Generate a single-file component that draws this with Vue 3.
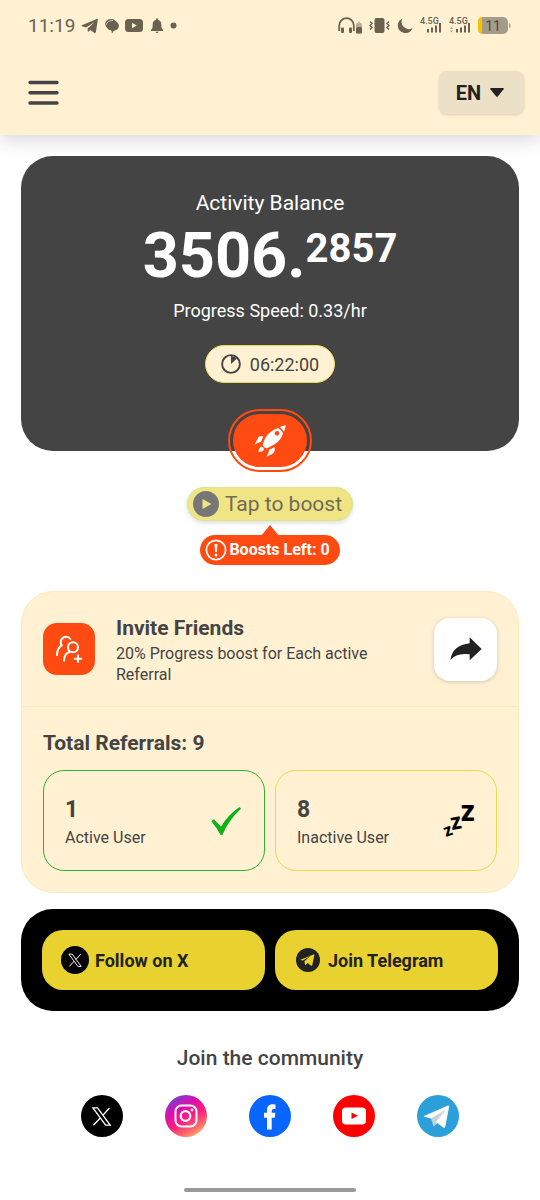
<script setup>
import { ref } from 'vue'

const balance = ref({ whole: '3506.', fraction: '2857' })
const speed = ref('0.33/hr')
const timer = ref('06:22:00')
const boostsLeft = ref(0)
const referrals = ref({ total: 9, active: 1, inactive: 8 })
const xLogo = 'M2.2 2.200h5.200L21.800 21.800h-5.200zM21 2.200l-7.900 8.700M10.700 13.300 2.800 21.800'
</script>

<template>
  <div class="page">
    <header class="header">
      <div class="status">
        <div class="status-group">
          <span class="clock">11:19</span>
          <svg width="18" height="18" viewBox="0 0 18 18" fill="#6a6250">
            <path d="M.8 8.300 15.800 2.100q1.200-.4 1 .8L14.900 15q-.4 1.600-1.700.8L9.200 13l-2.300 2-.3-3.600 6.800-6.100-8.300 5.300L.9 9.300q-.7-.6-.1-1z" />
          </svg>
          <svg width="14" height="18" viewBox="0 0 14 18">
            <ellipse cx="6" cy="7" rx="5.800" ry="5" fill="#6a6250" />
            <path d="M7.600 3.800c3.600 0 6.300 2.100 6.300 5 0 3-2.300 4.700-5 5L7 16.400l-.6-2.800C3.600 13 1.600 11.400 1.600 8.800c0-2.900 2.400-5 6-5z" fill="#6a6250" />
            <path d="M1.200 7.800C1.800 5 4.500 3.300 8 3.500" fill="none" stroke="#fff1d2" stroke-width=".7" />
          </svg>
          <svg width="18" height="18" viewBox="0 0 18 18">
            <rect x="0" y="2" width="18" height="13" rx="3.500" fill="#6a6250" />
            <path d="M7 5.800v5.400l4.800-2.700z" fill="#fff1d2" />
          </svg>
          <svg class="bell" width="12" height="18" viewBox="0 0 12 18" fill="#6a6250">
            <path d="M5 2.200q0-1 1-1t1 1v.5c2.300.6 3.300 2.400 3.300 4.800 0 3 .3 4.300 1.700 5.300V14H0v-1.200c1.400-1 1.700-2.300 1.700-5.300 0-2.400 1-4.200 3.300-4.800zM4.500 14.800h3q-.2 1.300-1.500 1.300t-1.500-1.300z" />
          </svg>
          <svg width="7" height="18" viewBox="0 0 7 18"><circle cx="3.500" cy="8.500" r="3" fill="#6a6250" /></svg>
        </div>
        <div class="status-group right">
          <svg width="24" height="18" viewBox="0 0 24 18">
            <path d="M1.200 14V8.500a7.300 7.300 0 0 1 14.600 0V14" fill="none" stroke="#6a6250" stroke-width="1.800" />
            <rect x="3" y="10.500" width="3" height="5.500" rx="1" fill="#6a6250" />
            <rect x="11" y="10.500" width="3" height="5.500" rx="1" fill="#6a6250" />
            <rect x="18" y="6" width="6" height="10.500" rx="1.500" fill="#b8ae93" />
            <rect x="18" y="10" width="6" height="6.500" rx="1.500" fill="#6a6250" />
            <rect x="20" y="4.500" width="2" height="2" fill="#cfc4a6" />
          </svg>
          <svg width="21" height="18" viewBox="0 0 21 18">
            <rect x="5.500" y="1" width="10" height="15" rx="2" fill="#6a6250" />
            <path d="m1 4.500 2 2-2 2 2 2-2 2M20 4.500l-2 2 2 2-2 2 2 2" fill="none" stroke="#6a6250" stroke-width="1.500" />
          </svg>
          <svg width="16" height="18" viewBox="0 0 16 18">
            <path d="M5.500 1.500A7.600 7.600 0 1 0 15.600 11 7.200 7.200 0 0 1 5.500 1.500z" fill="#6a6250" />
          </svg>
          <svg class="signal" width="22" height="18" viewBox="0 0 22 18" fill="#6a6250">
            <text x="0" y="7" class="net">4.5G</text>
            <path d="M7 12h2v3.500H7zM11 10.500h2v5h-2zM15 8.500h2v7h-2zM19 6h2v9.500h-2z" />
          </svg>
          <svg class="signal" width="22" height="18" viewBox="0 0 22 18" fill="#6a6250">
            <text x="0" y="7" class="net">4.5G</text>
            <path d="M7 12h2v3.500H7zM11 10.500h2v5h-2zM15 8.500h2v7h-2zM19 6h2v9.500h-2z" />
            <path d="m1 12 1.500-2L4 12zM1 13.500 2.500 15.500 4 13.500z" fill="#aaa189" />
          </svg>
          <svg width="33" height="18" viewBox="0 0 33 18">
            <rect x="0" y="0" width="30" height="17" rx="5" fill="#a49c88" />
            <path d="M4 0v17A4.500 4.500 0 0 1 0 12.500v-8A4.500 4.500 0 0 1 4 0z" fill="#f5c400" />
            <path d="M31 6q1.500 0 1.500 2.500T31 11z" fill="#a49c88" />
            <text x="15" y="13.500" text-anchor="middle" class="charge">11</text>
          </svg>
        </div>
      </div>
      <nav class="bar">
        <button class="menu" type="button" aria-label="Menu">
          <svg width="31" height="26" viewBox="0 0 31 26" stroke="#444" stroke-width="3.400" stroke-linecap="round">
            <path d="M2 2.500h27M2 12.800h27M2 23h27" />
          </svg>
        </button>
        <button class="lang" type="button">
          EN
          <svg width="14" height="9" viewBox="0 0 14 9"><path d="M1 0h12q1.400.2.600 1.300L8 8.300q-1 1-2 0L.4 1.300Q-.4.2 1 0z" fill="#222" /></svg>
        </button>
      </nav>
    </header>

    <main class="main">
      <section class="balance">
        <h1 class="balance-title">Activity Balance</h1>
        <p class="amount">{{ balance.whole }}<span>{{ balance.fraction }}</span></p>
        <p class="speed">Progress Speed: {{ speed }}</p>
        <div class="timer">
          <svg width="20" height="20" viewBox="0 0 20 20">
            <circle cx="10" cy="10" r="8.900" fill="none" stroke="#444" stroke-width="1.900" />
            <path d="M10 10V2a8 8 0 0 1 6 2.500z" fill="#444" />
          </svg>
          {{ timer }}
        </div>
      </section>

      <div class="boost">
        <button class="rocket" type="button" aria-label="Boost">
          <span class="rocket-core">
            <svg width="32" height="32" viewBox="0 0 96 96" fill="#fff">
              <path d="M77 6 93 1q3 0 2 3l-5 17q-5-10-13-15z" />
              <path fill-rule="evenodd" d="M72 9q11 5 15 16-4 19-25 33L41 69q-6 3-11-3-6-4-2-13l6-14Q46 18 72 9zM69 18a7 7 0 1 0 0 14 7 7 0 0 0 0-14z" />
              <path d="M28 34H18q-4 0-6 5L1 60q10-9 20-9z" />
              <path d="M62 66v10q0 7-7 11l-18 8q8-10 8-20z" />
              <path d="M21 65q9 1 9 10-6 7-16 6-1-11 7-16z" />
            </svg>
          </span>
        </button>
        <button class="tap" type="button">
          <svg width="26" height="26" viewBox="0 0 26 26">
            <circle cx="13" cy="13" r="13" fill="#777" />
            <path d="M9.500 8v10l9-5z" fill="#f0e484" />
          </svg>
          Tap to boost
        </button>
        <div class="left">
          <svg width="22" height="22" viewBox="0 0 22 22">
            <circle cx="11" cy="11" r="9.600" fill="none" stroke="#fff" stroke-width="1.700" />
            <path d="M9.500 5h3l-.6 8h-1.800z" fill="#fff" />
            <circle cx="11" cy="16" r="1.500" fill="#fff" />
          </svg>
          Boosts Left: {{ boostsLeft }}
        </div>
      </div>

      <section class="referrals">
        <div class="invite">
          <div class="invite-icon">
            <svg width="28" height="28" viewBox="0 0 84 84" fill="none" stroke="#fff" stroke-width="6" stroke-linecap="round">
              <path d="M46 12A16 16 0 1 0 20 31C12 36 6 46 6 60" />
              <circle cx="54" cy="37" r="15" />
              <path d="M43 51C32 55 27 64 27 77M69 61v20M59 71h20" />
            </svg>
          </div>
          <div class="invite-text">
            <h2>Invite Friends</h2>
            <p>20% Progress boost for Each active Referral</p>
          </div>
          <button class="share" type="button" aria-label="Share">
            <svg width="32" height="24" viewBox="0 0 96 72" fill="#222">
              <path d="M1 69Q8 24 59 19V1l36 35-36 34V52Q20 46 1 69z" />
            </svg>
          </button>
        </div>
        <div class="totals">
          <h3>Total Referrals: {{ referrals.total }}</h3>
          <div class="pair">
            <div class="stat active">
              <div class="stat-text">
                <strong>{{ referrals.active }}</strong>
                <span>Active User</span>
              </div>
              <svg class="check" width="30" height="28" viewBox="0 0 90 84">
                <path d="M1 43 9 37 30 59Q52 22 86 0l4 5Q52 40 34 84h-5Q17 62 1 43z" fill="#0bb413" />
              </svg>
            </div>
            <div class="stat">
              <div class="stat-text">
                <strong>{{ referrals.inactive }}</strong>
                <span>Inactive User</span>
              </div>
              <svg class="zzz" width="36" height="52" viewBox="0 0 36 52">
                <text x="22" y="26">Z</text>
                <text x="13" y="35" class="z2" transform="rotate(-10 13 35)">Z</text>
                <text x="7" y="42" class="z3" transform="rotate(-20 7 42)">Z</text>
              </svg>
            </div>
          </div>
        </div>
      </section>

      <section class="follow pair">
        <a href="#" class="follow-link">
          <svg width="28" height="28" viewBox="0 0 28 28">
            <circle cx="14" cy="14" r="14" fill="#000" />
            <path :d="xLogo" fill="none" stroke="#fff" stroke-width="1.500" transform="translate(6.500 6.700) scale(.63)" />
          </svg>
          Follow on X
        </a>
        <a href="#" class="follow-link">
          <svg width="28" height="28" viewBox="0 0 28 28">
            <circle cx="14" cy="14" r="12" fill="#222" />
            <path d="m6.500 13.700 13-5.300q1-.2.800.9l-2 9.800q-.4 1.200-1.500.5l-3.300-2.500-1.900 1.800q-.5.300-.6-.4l-.6-3.300 6-5.200-7.600 4.600-2.400-.6q-.7-.1.100-.3z" fill="#e9d22f" />
          </svg>
          Join Telegram
        </a>
      </section>

      <footer class="community">
        <h4>Join the community</h4>
        <div class="socials">
          <a href="#" aria-label="X">
            <svg width="42" height="42" viewBox="0 0 42 42">
              <circle cx="21" cy="21" r="21" />
              <path :d="xLogo" fill="none" stroke="#fff" stroke-width="1.500" transform="translate(10 11) scale(.88)" />
            </svg>
          </a>
          <a href="#" aria-label="Instagram">
            <svg width="42" height="42" viewBox="0 0 42 42">
              <defs>
                <linearGradient id="insta" x1=".2" y1="0" x2=".8" y2="1">
                  <stop offset="0" stop-color="#6a45d8" />
                  <stop offset=".3" stop-color="#d80fb0" />
                  <stop offset=".55" stop-color="#fb1b80" />
                  <stop offset=".8" stop-color="#fe6a68" />
                  <stop offset="1" stop-color="#ffc070" />
                </linearGradient>
              </defs>
              <circle cx="21" cy="21" r="21" fill="url(#insta)" />
              <g fill="none" stroke="#fff" stroke-width="2">
                <rect x="10.500" y="10.500" width="21" height="21" rx="6" />
                <circle cx="20.500" cy="21" r="4.800" stroke-width="2.200" />
              </g>
              <circle cx="27" cy="15" r="1.400" fill="#fff" />
            </svg>
          </a>
          <a href="#" aria-label="Facebook">
            <svg width="42" height="42" viewBox="0 0 42 42">
              <circle cx="21" cy="21" r="21" fill="#0866ff" />
              <path d="M18 34.500V22.800h-3v-5h3v-2.500c0-4 2-6 5.700-6q1.800 0 2.800.3V14h-2q-1.800 0-1.800 2v1.800h3.700l-.7 5h-3v11.700z" fill="#fff" />
            </svg>
          </a>
          <a href="#" aria-label="YouTube">
            <svg width="42" height="42" viewBox="0 0 42 42">
              <circle cx="21" cy="21" r="21" fill="red" />
              <rect x="9" y="12.500" width="24" height="17" rx="4" fill="#fff" />
              <path d="M18.500 17.500v6.500l6.500-3.200z" fill="red" />
            </svg>
          </a>
          <a href="#" aria-label="Telegram">
            <svg width="42" height="42" viewBox="0 0 42 42">
              <circle cx="21" cy="21" r="21" fill="#2a9fd9" />
              <path d="m14 23 2.500 8.500 5-4L28 15z" fill="#c4d2dc" />
              <path d="M7 21 31 10.500q1.500-.2 1.200 1.300l-4 20q-.5 1.600-2 .7L19 27l9.500-12L14 23.500l-7-1.700q-.8-.4 0-.8z" fill="#fff" />
            </svg>
          </a>
        </div>
      </footer>
    </main>
    <div class="home-bar"></div>
  </div>
</template>

<style>
body {
  background: #fff;
}
</style>

<style scoped>
.page {
  min-height: 100vh;
  display: flex;
  flex-direction: column;
  font-family: Roboto, 'Liberation Sans', sans-serif;
  color: #444;
}
.page,
.page *,
.page *::before {
  box-sizing: border-box;
}
h1, h2, h3, h4, p {
  margin: 0;
}
svg {
  display: block;
  flex: none;
}
button {
  border: 0;
  padding: 0;
  font-family: inherit;
  color: inherit;
  cursor: pointer;
}
a {
  color: inherit;
  text-decoration: none;
}
.header {
  padding-bottom: 21px;
  background: #fff1d2;
  box-shadow: 0 4px 18px rgba(40, 40, 70, 0.2);
}
.status {
  height: 52px;
  padding: 0 29px 0 28px;
  display: flex;
  align-items: center;
  justify-content: space-between;
}
.status-group {
  display: flex;
  align-items: center;
  gap: 6px;
}
.status-group.right {
  gap: 7px;
}
.bell {
  margin: 0 1px 0 2px;
}
.clock {
  font-size: 19px;
  line-height: 20px;
  color: #6a6250;
}
.signal {
  overflow: visible;
}
.net {
  font-size: 9px;
  font-weight: 500;
}
.charge {
  font-size: 14px;
  fill: #4d483c;
}
.bar {
  display: flex;
  align-items: center;
  justify-content: space-between;
  padding: 19px 16px 0 28px;
}
.menu {
  background: none;
}
.lang {
  height: 43px;
  padding: 0 20px 0 17px;
  display: flex;
  align-items: center;
  gap: 9px;
  border-radius: 8px;
  background: #ece1c6;
  box-shadow: 0 1px 3px rgba(0, 0, 0, 0.15);
  font-size: 20px;
  font-weight: 700;
  color: #222;
}
.main {
  padding: 21px 21px 42px;
}
.balance {
  padding: 33px 21px 68px;
  border-radius: 32px;
  background: #444;
  color: #fff;
  display: flex;
  flex-direction: column;
  align-items: center;
}
.balance-title {
  font-size: 21px;
  line-height: 28px;
  font-weight: 400;
}
.amount {
  display: flex;
  align-items: flex-start;
  font-size: 63px;
  line-height: 78px;
  font-weight: 700;
}
.amount span {
  font-size: 40px;
  line-height: 63px;
}
.speed {
  margin-top: 2px;
  font-size: 18px;
  line-height: 28px;
}
.timer {
  margin-top: 20px;
  height: 38px;
  padding: 0 15px;
  display: flex;
  align-items: center;
  gap: 9px;
  border: 1px solid #e9dc5c;
  border-radius: 19px;
  background: #fff1d2;
  color: #444;
  font-size: 18px;
}
.boost {
  margin-top: -42px;
  display: flex;
  flex-direction: column;
  align-items: center;
}
.rocket {
  width: 84px;
  height: 63px;
  padding: 3px;
  border: 2px solid #ff4b12;
  border-radius: 32px;
  background: none;
}
.rocket-core {
  height: 100%;
  display: flex;
  align-items: center;
  justify-content: center;
  border-radius: 27px;
  background: #ff4b12;
}
.tap {
  margin-top: 15px;
  height: 34px;
  padding: 0 10px 0 5px;
  display: flex;
  align-items: center;
  gap: 6px;
  border: 1px solid #d3ea8c;
  border-radius: 17px;
  background: #f0e484;
  box-shadow: 0 2px 5px rgba(0, 0, 0, 0.14);
  font-size: 21px;
  color: #706c58;
}
.left {
  position: relative;
  margin-top: 14px;
  height: 30px;
  padding: 0 10px 0 5px;
  display: flex;
  align-items: center;
  gap: 2px;
  border-radius: 15px;
  background: #ff4b12;
  color: #fff;
  font-size: 16px;
  line-height: 20px;
  font-weight: 700;
}
.left::before {
  content: '';
  position: absolute;
  left: calc(50% - 9px);
  top: -10px;
  border: 9px solid transparent;
  border-top: 0;
  border-bottom: 11px solid #ff4b12;
}
.referrals {
  margin-top: 26px;
  border: 1px solid #fbebbb;
  border-radius: 32px;
  background: #fff1d2;
}
.invite {
  padding: 21px;
  display: flex;
  align-items: center;
  gap: 21px;
  border-bottom: 1px solid #fae8c0;
}
.invite-icon {
  flex: none;
  width: 52px;
  height: 52px;
  display: flex;
  align-items: center;
  justify-content: center;
  border-radius: 14px;
  background: #ff4b12;
}
.invite-text {
  flex: 1;
}
.invite-text h2 {
  font-size: 21px;
  line-height: 30px;
  font-weight: 700;
}
.invite-text p {
  font-size: 16px;
  line-height: 21px;
}
.share {
  flex: none;
  width: 63px;
  height: 63px;
  display: flex;
  align-items: center;
  justify-content: center;
  border-radius: 16px;
  background: #fff;
  box-shadow: 0 1px 4px rgba(0, 0, 0, 0.18);
}
.totals {
  padding: 22px 21px 21px;
}
.totals h3 {
  margin-bottom: 13px;
  font-size: 21px;
  line-height: 28px;
  font-weight: 700;
}
.pair {
  display: grid;
  grid-template-columns: 1fr 1fr;
  gap: 10px;
}
.stat {
  padding: 20px 21px;
  display: flex;
  align-items: center;
  justify-content: space-between;
  border: 1px solid #e8d94f;
  border-radius: 21px;
}
.stat.active {
  border-color: #2fb236;
}
.stat-text {
  padding-top: 3px;
}
.stat strong {
  display: block;
  font-size: 23px;
  line-height: 32px;
}
.stat span {
  display: block;
  font-size: 16px;
  line-height: 24px;
}
.check {
  margin-right: 2px;
}
.zzz {
  font-family: 'Open Sans', sans-serif;
  font-weight: 800;
  font-size: 22px;
  fill: #000;
}
.z2 {
  font-size: 17px;
}
.z3 {
  font-size: 13px;
}
.follow {
  margin-top: 16px;
  padding: 21px;
  border-radius: 32px;
  background: #000;
}
.follow-link {
  height: 60px;
  padding: 0 19px;
  display: flex;
  align-items: center;
  gap: 6px;
  border-radius: 21px;
  background: #e9d22f;
  color: #222;
  font-size: 18px;
  font-weight: 700;
}
.community {
  margin-top: 33px;
  text-align: center;
}
.community h4 {
  font-size: 21px;
  line-height: 28px;
  font-weight: 500;
}
.socials {
  margin-top: 23px;
  display: flex;
  justify-content: center;
  gap: 42px;
}
.home-bar {
  width: 172px;
  height: 4px;
  margin: auto auto 8px;
  border-radius: 2px;
  background: #999;
}
</style>
